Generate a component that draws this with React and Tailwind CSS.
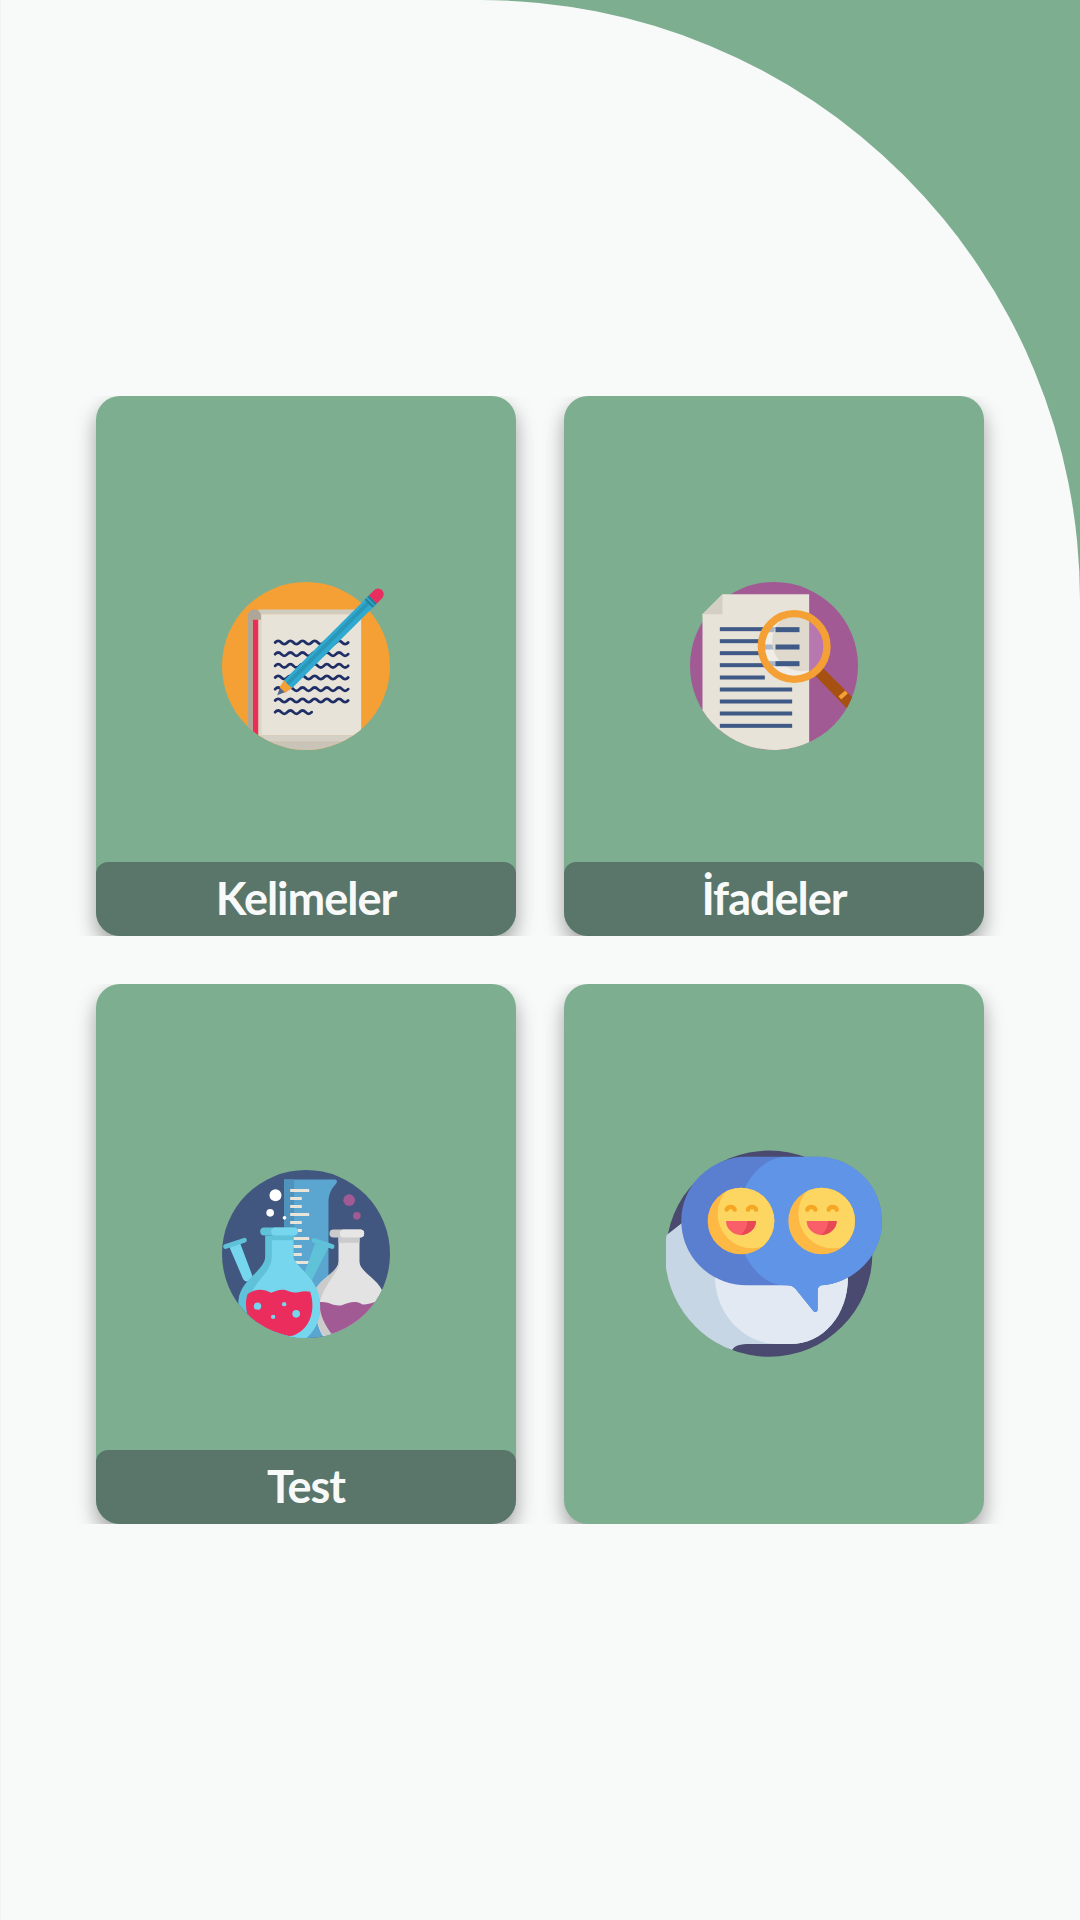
import React from "react";

function Wave({ y, x2 = 444 }) {
  let d = `M225 ${y}`;
  let up = true;
  for (let x = 225; x + 18 <= x2; x += 18.25) {
    d += ` q9.1 ${up ? -10 : 10} 18.25 0`;
    up = !up;
  }
  return <path d={d} fill="none" stroke="#1f2f66" strokeWidth="8.5" strokeLinecap="round" />;
}

function NotebookIcon() {
  return (
    <svg viewBox="65.5 65.5 504 504" className="w-[168px] h-[168px]">
      <defs>
        <clipPath id="c1"><circle cx="317.5" cy="317.5" r="252" /></clipPath>
      </defs>
      <circle cx="317.5" cy="317.5" r="252" fill="#f4a034" />
      <g clipPath="url(#c1)">
        <rect x="174" y="178" width="9" height="400" fill="#dbd7cb" />
        <rect x="158" y="178" width="16" height="400" fill="#e82d5f" />
        <rect x="175" y="148" width="308" height="14" fill="#d0ccc0" />
        <path d="M161 148A20 20 0 0 1 183 168V178H158V600H143V166A18 18 0 0 1 161 148Z" fill="#ada79b" />
        <rect x="183" y="162" width="300" height="364" fill="#e7e3d8" />
        <rect x="183" y="525" width="320" height="20" fill="#d5d0c5" />
        <rect x="183" y="544" width="320" height="30" fill="#cac3b7" />
      </g>
      {[247, 282, 317, 352, 387, 421].map((y) => <Wave key={y} y={y} />)}
      <Wave y={456} x2={350} />
      <g transform="translate(231 405) rotate(-45)">
        <path d="M0 0L24 -11V11Z" fill="#56658a" />
        <path d="M22 -12L48 -17V17L22 12Z" fill="#f4a034" />
        <rect x="46" y="-17" width="342" height="34" fill="#2fa9cf" />
        <rect x="46" y="-8" width="342" height="11" fill="#2a96b8" />
        <rect x="388" y="-17" width="18" height="34" fill="#1f7f9a" />
        <rect x="394" y="-17" width="5" height="34" fill="#2fa9cf" />
        <path d="M406 -17H428A17 17 0 0 1 428 17H406Z" fill="#e82d5f" />
      </g>
    </svg>
  );
}

function DocumentIcon() {
  const rows = [207, 243, 279, 315, 352];
  return (
    <svg viewBox="59.5 65.5 504 504" className="w-[168px] h-[168px]">
      <defs>
        <clipPath id="c2"><circle cx="311.5" cy="317.5" r="252" /></clipPath>
        <clipPath id="lens"><circle cx="372" cy="260" r="90" /></clipPath>
      </defs>
      <circle cx="311.5" cy="317.5" r="252" fill="#a25a94" />
      <path d="M157 102H417V546A252 252 0 0 1 97 450V162Z" fill="#e7e3d8" />
      <path d="M157 102V162H97Z" fill="#d3cfc4" />
      {rows.map((y) => <rect key={y} x="149" y={y - 6} width="135" height="12" fill="#3f5a86" />)}
      {[388, 424, 460, 497].map((y) => <rect key={y} x="149" y={y - 6} width="217" height="12" fill="#3f5a86" />)}
      <g clipPath="url(#c2)">
        <path d="M460 325L560 425L535 450L437 348Z" fill="#a65011" />
        <path d="M505 408L525 391L533 400L513 418Z" fill="#f4a034" />
      </g>
      <g clipPath="url(#lens)">
        <rect x="270" y="160" width="147" height="200" fill="#efede6" />
        {[208, 260, 310].map((y) => <rect key={y} x="270" y={y - 7} width="118" height="15" fill="#a9b6cb" />)}
        <circle cx="396" cy="243" r="90" fill="#dfdacd" />
        <rect x="417" y="153" width="60" height="200" fill="#b877ae" />
        {[208, 260, 310].map((y) => <rect key={y} x="316" y={y - 7} width="72" height="15" fill="#3f5a86" />)}
      </g>
      <circle cx="372" cy="259" r="98.5" fill="none" stroke="#f4a034" strokeWidth="22" />
    </svg>
  );
}

function LabIcon() {
  const ticks = [
    [121, 327], [145, 305], [169, 305], [193, 327], [217, 305], [241, 305],
    [265, 327], [289, 305], [313, 305], [337, 327], [361, 305],
  ];
  return (
    <svg viewBox="65.5 59.5 504 504" className="w-[168px] h-[168px]">
      <defs>
        <clipPath id="c3"><circle cx="317.5" cy="311.5" r="252" /></clipPath>
      </defs>
      <circle cx="317.5" cy="311.5" r="252" fill="#41577f" />
      <g clipPath="url(#c3)">
        <path d="M252 88H404C411 88 412 95 408 100C395 115 385 130 385 155V580H252Z" fill="#5ba6d1" />
        <rect x="252" y="88" width="30" height="490" fill="#4f93bd" />
        {ticks.map(([y, x2]) => <rect key={y} x="270" y={y - 4.5} width={x2 - 270} height="9" fill="#e8e4d8" />)}
        <circle cx="226" cy="135" r="18" fill="#fff" />
        <circle cx="210" cy="188" r="11.5" fill="#fff" />
        <circle cx="253" cy="203" r="5.5" fill="#fff" />
        <circle cx="447" cy="150" r="17.5" fill="#a25a94" />
        <circle cx="470" cy="197" r="11.5" fill="#a25a94" />

        <path d="M415 258H478V335C478 365 535 385 550 430C548 500 480 555 400 570H380C350 545 340 480 345 420C360 385 415 365 415 335Z" fill="#e3e3e3" />
        <path d="M418 335C418 365 375 395 358 458L400 550L385 570C350 545 340 480 345 420C360 385 415 365 415 335Z" fill="#cbcbcb" />
        <path d="M358 456C385 452 400 470 425 465C445 458 465 450 485 462C500 466 515 458 535 452L540 580H400L395 552C375 525 358 495 358 456Z" fill="#a25a94" />
        <rect x="415" y="258" width="63" height="20" fill="#cbcbcb" />
        <rect x="388" y="238" width="104" height="24" rx="12" fill="#cbcbcb" />
        <rect x="419" y="238" width="73" height="24" rx="12" fill="#e6e6e6" />

        <path d="M88 291L120 279L156 375C160 392 135 402 128 385Z" fill="#75d6ee" />
        <path d="M76 289L133 270" stroke="#5fc2d8" strokeWidth="14" strokeLinecap="round" />
        <path d="M345 280L385 292L335 390L310 375Z" fill="#5fc2d8" />
        <path d="M342 271L396 289" stroke="#5fc2d8" strokeWidth="14" strokeLinecap="round" />

        <path d="M195 256H280V320C280 350 360 380 360 470C360 530 325 565 280 575H190C130 560 112 500 115 450C120 390 195 360 195 320Z" fill="#5fc2d8" />
        <path d="M215 256H280V320C280 350 360 380 360 470C360 530 325 565 300 575H240C190 560 150 500 150 450C150 400 215 370 215 320Z" fill="#75d6ee" />
        <rect x="215" y="256" width="65" height="14" fill="#5fc2d8" />
        <path d="M142 432C165 416 190 415 212 428C232 422 245 412 270 425C290 432 305 418 330 425C345 470 335 520 300 545C285 555 275 560 262 557C215 545 170 525 141 490C136 470 136 450 142 432Z" fill="#ea2d5d" />
        <circle cx="172" cy="468" r="11" fill="#75d6ee" />
        <circle cx="252" cy="462" r="6.5" fill="#75d6ee" />
        <circle cx="288" cy="491" r="11.5" fill="#75d6ee" />
        <circle cx="219" cy="500" r="6.5" fill="#75d6ee" />
        <rect x="180" y="232" width="113" height="24" rx="12" fill="#5fc2d8" />
        <rect x="213" y="232" width="80" height="24" rx="12" fill="#75d6ee" />
      </g>
    </svg>
  );
}

function Face({ dx, id }) {
  return (
    <g transform={`translate(${dx} 0)`}>
      <clipPath id={id}><circle cx="273" cy="273" r="100" /></clipPath>
      <circle cx="273" cy="273" r="100" fill="#fdb943" />
      <circle cx="307" cy="251" r="104" fill="#fdd662" clipPath={`url(#${id})`} />
      <path d="M230 239a12 8 0 0 1 24 0M294 239a12 8 0 0 1 24 0" fill="none" stroke="#f5a623" strokeWidth="13" strokeLinecap="round" />
      <path d="M228 273H318C318 298 295 315 273 315C250 315 228 298 228 273Z" fill="#f95f68" />
      <path d="M292 273H318C318 298 295 315 270 315C283 308 292 290 292 273Z" fill="#e84855" />
    </g>
  );
}

function ChatIcon() {
  const bubble = "M290 80L500 80C608 80 696 166 696 273C696 375 615 458 515 466C508 467 503 473 503 482L503 538C503 547 494 548 490 543L437 477C430 469 420 466 410 466L290 466C182 466 94 380 94 273C94 166 182 80 290 80Z";
  return (
    <svg viewBox="48 48 648 648" className="w-[216px] h-[216px]">
      <defs>
        <clipPath id="b1"><path d={bubble} /></clipPath>
      </defs>
      <circle cx="357.5" cy="371" r="309.5" fill="#4a4a70" />
      <path d="M95 280L50 315A309.5 309.5 0 0 0 246 660C255 646 270 642 300 642L420 642C520 642 594 555 594 440L594 300Z" fill="#c7d6e5" />
      <path d="M195 440C195 550 280 640 380 642L420 642C520 642 594 555 594 440L594 300L195 300Z" fill="#e3e9f3" />
      <path d={bubble} fill="#5b7fd0" />
      <path d="M400 80C320 90 262 180 262 273C262 365 320 460 400 466L400 700L720 700L720 40Z" fill="#6094e6" clipPath="url(#b1)" />
      <Face dx={0} id="f1" />
      <Face dx={242} id="f2" />
    </svg>
  );
}

function Card({ label, children }) {
  return (
    <div className="h-[540px] overflow-hidden px-6">
      <div className="relative h-full rounded-3xl bg-[#7dae90] shadow-[0_10px_20px_rgba(0,0,0,0.36)] flex items-center justify-center overflow-hidden">
        {children}
        {label && (
          <div className="absolute inset-x-0 bottom-0 h-[74px] rounded-t-xl bg-[#5a7569] flex items-center justify-center">
            <span className="text-[45px] leading-none font-bold text-[#f8faf9] font-['Lato','Liberation_Sans',sans-serif] tracking-[-1px] -mt-0.5">{label}</span>
          </div>
        )}
      </div>
    </div>
  );
}

export default function App() {
  return (
    <div className="relative w-[1080px] h-[1920px] overflow-hidden bg-[#f8faf9] border-l border-[#f0f5f3]">
      <div className="absolute top-0 right-0 w-[600px] h-[600px] bg-[#7dae90]">
        <div className="w-full h-full rounded-tr-[600px] bg-[#f8faf9]" />
      </div>
      <div className="relative pt-[396px] pl-[71px] pr-[72px] grid grid-cols-2 gap-y-12">
        <Card label="Kelimeler"><NotebookIcon /></Card>
        <Card label="İfadeler"><DocumentIcon /></Card>
        <Card label="Test"><LabIcon /></Card>
        <Card><ChatIcon /></Card>
      </div>
    </div>
  );
}
